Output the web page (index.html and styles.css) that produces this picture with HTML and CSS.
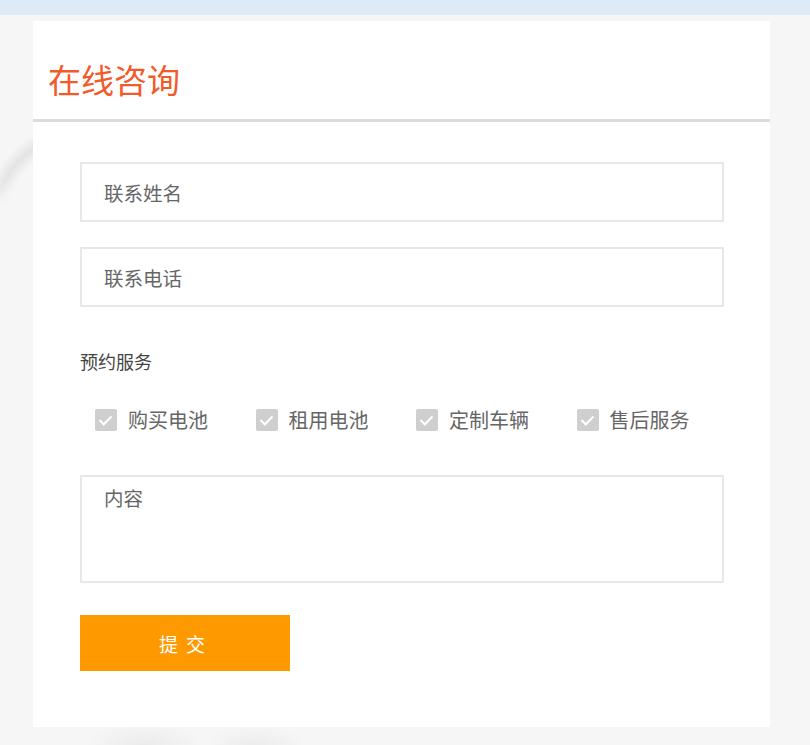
FILE: index.html
```html
<!DOCTYPE html>
<html lang="zh-CN">
<head>
    <meta charset="UTF-8">
    <title>在线咨询</title>
    <link rel="stylesheet" href="styles.css">
</head>
<body>
    <div class="topbar"></div>
    <div class="consult-box">
        <div class="consult-head">
            <h2 class="title">在线咨询</h2>
        </div>
        <form class="consult-form">
            <input type="text" class="field" placeholder="联系姓名">
            <input type="text" class="field" placeholder="联系电话">

            <p class="group-label">预约服务</p>
            <div class="options">
                <label class="option"><span class="check"></span>购买电池</label>
                <label class="option"><span class="check"></span>租用电池</label>
                <label class="option"><span class="check"></span>定制车辆</label>
                <label class="option"><span class="check"></span>售后服务</label>
            </div>

            <textarea class="field content" placeholder="内容"></textarea>

            <button type="button" class="submit">提交</button>
        </form>
    </div>
</body>
</html>
```

FILE: styles.css
```css
body {
    margin: 0;
    background-color: #f6f6f6;
    /* faint blurred shapes of the page background picture */
    background-image:
        linear-gradient(rgba(246, 246, 246, 0), #f6f6f6 25px),
        radial-gradient(circle at 78px 218px, rgba(246, 246, 246, 0) 70px, #e4e4e4 82px, rgba(246, 246, 246, 0) 94px),
        radial-gradient(ellipse 60px 22px at 145px 745px, #ebebeb, rgba(246, 246, 246, 0)),
        radial-gradient(ellipse 50px 20px at 255px 745px, #ececec, rgba(246, 246, 246, 0));
    background-size: 40px 160px, auto, auto, auto;
    background-position: 0 180px, 0 0, 0 0, 0 0;
    background-repeat: no-repeat;
    font-family: "Noto Sans CJK SC", "Noto Sans", sans-serif;
    height: 745px;
    overflow: hidden;
}

.topbar {
    height: 15px;
    background: #deebf7;
}

.consult-box {
    position: relative;
    background: #fff;
    width: 737px;
    margin: 6px 0 0 33px;
}

.consult-head {
    border-bottom: 3px solid #dcdcdc;
    padding: 39px 15px 21px;
}

.title {
    margin: 0;
    font-size: 33px;
    line-height: 38px;
    font-weight: normal;
    color: #f25a29;
}

.consult-form {
    padding: 40px 46px 56px 47px;
}

.field {
    display: block;
    box-sizing: border-box;
    width: 100%;
    height: 60px;
    margin: 0 0 25px;
    padding: 0 22px;
    border: 2px solid #e8e8e8;
    outline: none;
    font-family: inherit;
    font-size: 19.5px;
    color: #333;
}

.field::placeholder {
    color: #666;
}

.group-label {
    margin: 42px 0 0;
    font-size: 18px;
    line-height: 24px;
    color: #444;
}

.options {
    display: flex;
    margin: 35px 0 0;
    padding-left: 15px;
}

.option {
    display: flex;
    flex-shrink: 0;
    align-items: center;
    width: 160.5px;
    font-size: 20px;
    line-height: 24px;
    color: #666;
}

.check {
    position: relative;
    width: 22px;
    height: 22px;
    margin-right: 11px;
    border-radius: 2px;
    background: #cfcfcf;
}

.check::after {
    content: "";
    position: absolute;
    left: 7px;
    top: 4px;
    width: 5px;
    height: 10px;
    border: solid #fff;
    border-width: 0 2px 2px 0;
    transform: rotate(45deg);
}

.content {
    height: 108px;
    margin: 43px 0 0;
    padding: 8px 22px;
    resize: none;
    line-height: 26px;
}

.submit {
    display: block;
    width: 210px;
    height: 56px;
    margin-top: 32px;
    border: none;
    background: #ff9900;
    color: #fff;
    font-family: inherit;
    font-size: 19px;
    letter-spacing: 8px;
    padding-left: 8px;
    cursor: pointer;
}
```
